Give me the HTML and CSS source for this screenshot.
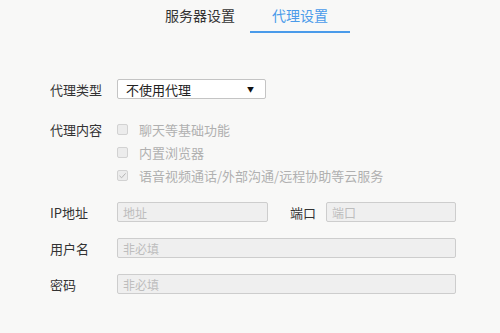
FILE: index.html
```html
<!DOCTYPE html>
<html lang="zh-CN">
<head>
  <meta charset="UTF-8" />
  <title>代理设置</title>
  <link rel="stylesheet" href="styles.css">
</head>
<body>
  <!-- Tabs -->
  <div class="tabs">
    <div class="tab">服务器设置</div>
    <div class="tab active">代理设置</div>
  </div>

  <!-- Proxy form -->
  <div class="form">
    <div class="row">
      <div class="label">代理类型</div>
      <div class="select">
        <span>不使用代理</span>
        <span class="arrow">▼</span>
      </div>
    </div>

    <div class="row row-top">
      <div class="label label-tall">代理内容</div>
      <div class="checks">
        <div class="check"><span class="box"></span>聊天等基础功能</div>
        <div class="check"><span class="box"></span>内置浏览器</div>
        <div class="check">
          <span class="box">
            <svg width="9" height="9" viewBox="0 0 9 9"><path d="M1.5 4.8 L3.6 6.8 L7.6 2.4" fill="none" stroke="#b4b4b4" stroke-width="1"/></svg>
          </span>语音视频通话/外部沟通/远程协助等云服务
        </div>
      </div>
    </div>

    <div class="row row-ip">
      <div class="label">IP地址</div>
      <input class="field field-ip" type="text" placeholder="地址" readonly>
      <div class="label-port">端口</div>
      <input class="field field-port" type="text" placeholder="端口" readonly>
    </div>

    <div class="row row-field">
      <div class="label">用户名</div>
      <input class="field field-wide" type="text" placeholder="非必填" readonly>
    </div>

    <div class="row row-field">
      <div class="label">密码</div>
      <input class="field field-wide" type="password" placeholder="非必填" readonly>
    </div>
  </div>
</body>
</html>
```

FILE: styles.css
```css
body {
  margin: 0;
  height: 333px;
  background: #f8f8f7;
  font-family: "Noto Sans CJK SC", "Noto Sans", sans-serif;
  color: #333;
  overflow: hidden;
}

/* Tabs */
.tabs {
  display: flex;
  justify-content: center;
  height: 33px;
}

.tab {
  width: 100px;
  text-align: center;
  font-size: 14px;
  line-height: 31px;
  border-bottom: 2px solid transparent;
  color: #333;
}

.tab.active {
  color: #4a9bea;
  border-bottom-color: #4a9bea;
}

/* Form */
.form {
  padding: 46px 44px 0 50px;
}

.row {
  display: flex;
  align-items: center;
}

.row-top {
  align-items: flex-start;
  margin-top: 19px;
}

.row-ip {
  margin-top: 15px;
}

.row-field {
  margin-top: 16px;
}

.label {
  width: 67px;
  font-size: 13px;
  color: #333;
}

.label-tall {
  line-height: 23px;
}

.select {
  width: 149px;
  height: 20px;
  box-sizing: border-box;
  background: #fff;
  border: 1px solid #c4c4c4;
  border-radius: 2px;
  display: flex;
  align-items: center;
  justify-content: space-between;
  padding: 0 11px 0 8px;
  font-size: 13px;
  color: #222;
}

.arrow {
  font-size: 7px;
  color: #111;
}

.checks {
  display: flex;
  flex-direction: column;
}

.check {
  height: 23px;
  display: flex;
  align-items: center;
  font-size: 13px;
  color: #b0b0b0;
}

.box {
  width: 11px;
  height: 11px;
  box-sizing: border-box;
  border: 1px solid #d2d2d2;
  border-radius: 2px;
  background: #ececec;
  margin-right: 11px;
  display: flex;
  align-items: center;
  justify-content: center;
}

.field {
  height: 20px;
  box-sizing: border-box;
  margin: 0;
  padding: 0 5px;
  background: #efefef;
  border: 1px solid #cdcdcd;
  border-radius: 2px;
  font-family: inherit;
  font-size: 12px;
  outline: none;
}

.field::placeholder {
  color: #bdbdbd;
}

.field-ip {
  width: 151px;
}

.label-port {
  width: 36px;
  margin-left: 22px;
  font-size: 13px;
}

.field-port {
  width: 130px;
}

.field-wide {
  width: 339px;
}
```
